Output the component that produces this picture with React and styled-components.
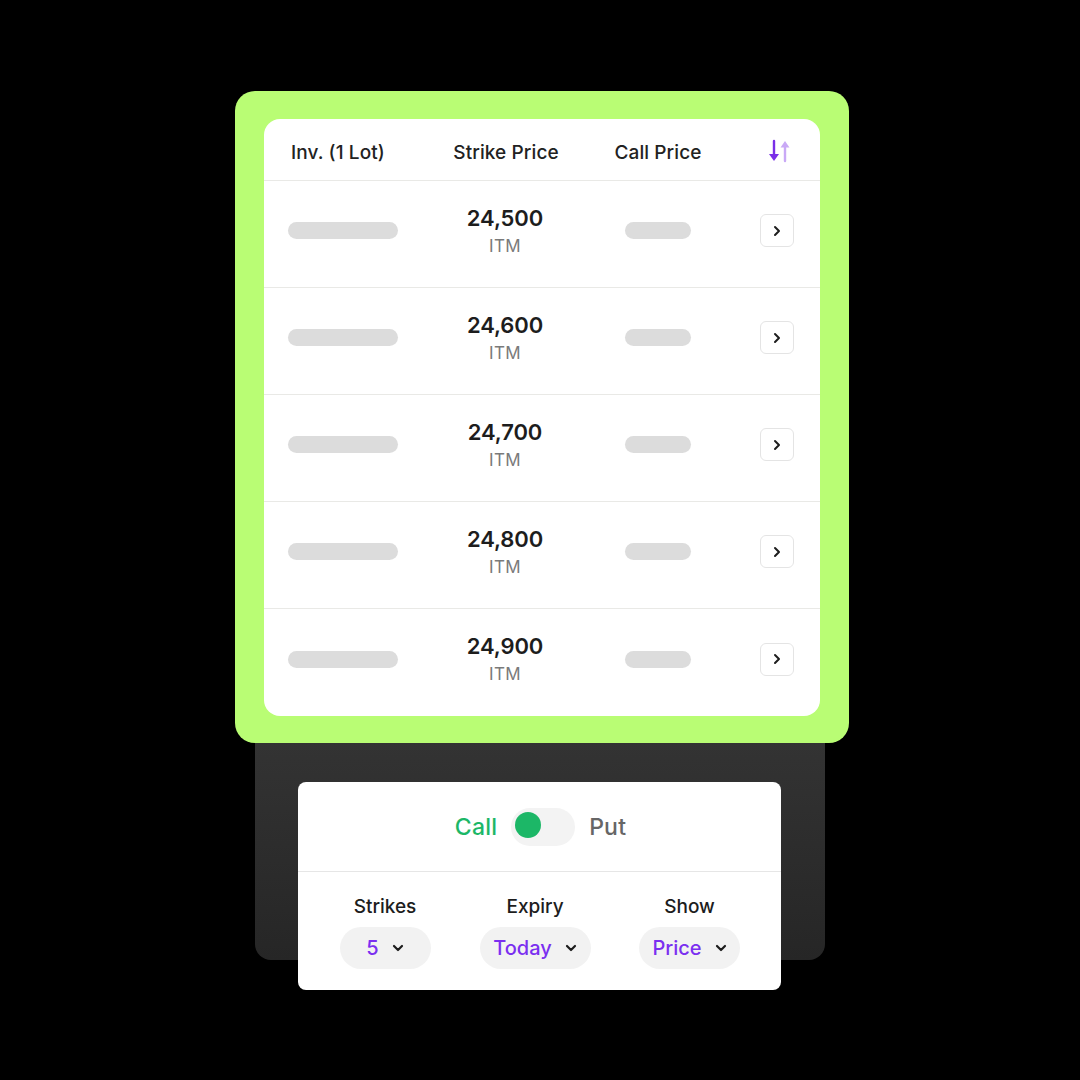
import React from 'react';
import styled, { createGlobalStyle } from 'styled-components';

const GlobalStyle = createGlobalStyle`
  html, body {
    margin: 0;
    padding: 0;
    background: #000;
  }
  body {
    font-family: Inter, "Noto Sans", sans-serif;
    -webkit-font-smoothing: antialiased;
  }
`;

const Page = styled.div`
  width: 1080px;
  height: 1080px;
  display: flex;
  flex-direction: column;
  align-items: center;
  padding-top: 91px;
  box-sizing: border-box;
`;

const GreenCard = styled.div`
  width: 614px;
  margin-left: 4px;
  box-sizing: border-box;
  padding: 28px 29px 27px 29px;
  background: #b9fd74;
  border-radius: 20px;
  position: relative;
  z-index: 1;
`;

const Table = styled.div`
  background: #fff;
  border-radius: 16px;
  overflow: hidden;
`;

const Grid = styled.div`
  display: grid;
  grid-template-columns: 140px 156px 148px 1fr;
  align-items: center;
  padding: ${p => (p.$head ? '0' : '0 0 7px 0')};
  padding-left: 24px;
  padding-right: 26px;
  box-sizing: border-box;
  height: ${p => p.$h}px;
  border-bottom: ${p => (p.$last ? 'none' : '1.5px solid #e9e9e6')};
`;

const HeadCell = styled.div`
  font-size: 19px;
  font-weight: 500;
  color: #222;
  letter-spacing: 0.1px;
  margin-top: 5px;
  white-space: nowrap;
  text-align: ${p => p.$align || 'center'};
  padding-left: ${p => (p.$align === 'left' ? '3px' : '0')};
`;

const SortCell = styled.div`
  display: flex;
  justify-content: flex-end;
  padding-right: 2px;
  margin-top: 3px;
`;

const Skeleton = styled.div`
  width: ${p => p.$w}px;
  height: 17px;
  border-radius: 9px;
  background: #dcdcdc;
  justify-self: ${p => p.$justify || 'start'};
`;

const Strike = styled.div`
  display: flex;
  flex-direction: column;
  align-items: center;
  margin-left: -2px;
  gap: 4px;
`;

const StrikeValue = styled.div`
  font-size: 22px;
  font-weight: 600;
  color: #1d1d1d;
  letter-spacing: -0.1px;
  line-height: 26px;
`;

const StrikeTag = styled.div`
  font-size: 17px;
  color: #7a7a7a;
  line-height: 22px;
  letter-spacing: 0.3px;
`;

const ChevronBtn = styled.div`
  justify-self: end;
  width: 34px;
  height: 33px;
  box-sizing: border-box;
  border: 1.5px solid #e4e4e4;
  border-radius: 6px;
  display: flex;
  align-items: center;
  justify-content: center;
  color: #222;
`;

const DarkPanel = styled.div`
  width: 570px;
  height: 217px;
  box-sizing: border-box;
  padding-top: 39px;
  border-radius: 0 0 16px 16px;
  background: linear-gradient(180deg, #333 0%, #262626 100%);
  display: flex;
  justify-content: center;
`;

const ControlCard = styled.div`
  width: 483px;
  height: 208px;
  flex-shrink: 0;
  background: #fff;
  border-radius: 8px;
  display: flex;
  flex-direction: column;
  margin-left: -1px;
`;

const ToggleRow = styled.div`
  height: 89px;
  display: flex;
  align-items: center;
  justify-content: center;
  gap: 14px;
  border-bottom: 1.5px solid #e6e6e6;
  padding-left: 2px;
`;

const ToggleLabel = styled.span`
  font-size: 23px;
  font-weight: 500;
  letter-spacing: 0.2px;
  color: ${p => (p.$active ? '#1cb767' : '#666')};
  margin-top: 1px;
`;

const Track = styled.div`
  width: 64px;
  height: 38px;
  border-radius: 19px;
  background: #f3f3f3;
  display: flex;
  align-items: center;
  padding-left: 4px;
  box-sizing: border-box;
`;

const Knob = styled.div`
  width: 26px;
  height: 26px;
  border-radius: 50%;
  background: #1cb767;
  margin-top: -3px;
`;

const Filters = styled.div`
  flex: 1;
  display: grid;
  grid-template-columns: 174px 126px 1fr;
  padding-top: 23px;
`;

const Filter = styled.div`
  display: flex;
  flex-direction: column;
  align-items: center;
  gap: 9px;
`;

const FilterLabel = styled.div`
  font-size: 19px;
  font-weight: 500;
  color: #1d1d1d;
`;

const Pill = styled.div`
  height: 42px;
  padding: 0 12px 0 13px;
  border-radius: 21px;
  background: #f2f2f2;
  display: flex;
  align-items: center;
  gap: 12px;
  box-sizing: border-box;
  min-width: ${p => p.$min || 0}px;
  justify-content: center;
`;

const PillValue = styled.span`
  font-size: 20px;
  font-weight: 500;
  color: #7b2ff0;
`;

const SortIcon = () => (
  <svg width="26" height="26" viewBox="0 0 26 26">
    <path d="M8 3 V19" stroke="#7a2fe8" strokeWidth="2.4" strokeLinecap="round" />
    <path d="M3 16 L8 23 L13 16 Z" fill="#7a2fe8" />
    <path d="M19 23 V8" stroke="#c9a9f6" strokeWidth="2.4" strokeLinecap="round" />
    <path d="M14.5 9.5 L19 3 L23.5 9.5 Z" fill="#c9a9f6" />
  </svg>
);

const ChevronRight = () => (
  <svg width="12" height="12" viewBox="0 0 12 12">
    <path d="M4 2 L8 6 L4 10" fill="none" stroke="#1d1d1d" strokeWidth="2" strokeLinecap="round" strokeLinejoin="round" />
  </svg>
);

const ChevronDown = () => (
  <svg width="14" height="14" viewBox="0 0 14 14">
    <path d="M3 5 L7 9 L11 5" fill="none" stroke="#1d1d1d" strokeWidth="2.2" strokeLinecap="round" strokeLinejoin="round" />
  </svg>
);

const strikes = ['24,500', '24,600', '24,700', '24,800', '24,900'];

const filters = [
  { label: 'Strikes', value: '5', min: 91 },
  { label: 'Expiry', value: 'Today', min: 111 },
  { label: 'Show', value: 'Price', min: 99 },
];

export default function App() {
  return (
    <>
      <GlobalStyle />
      <Page>
        <GreenCard>
          <Table>
            <Grid $head $h={62}>
              <HeadCell $align="left">Inv. (1 Lot)</HeadCell>
              <HeadCell>Strike Price</HeadCell>
              <HeadCell>Call Price</HeadCell>
              <SortCell>
                <SortIcon />
              </SortCell>
            </Grid>
            {strikes.map((s, i) => (
              <Grid key={s} $h={107} $last={i === strikes.length - 1}>
                <Skeleton $w={110} />
                <Strike>
                  <StrikeValue>{s}</StrikeValue>
                  <StrikeTag>ITM</StrikeTag>
                </Strike>
                <Skeleton $w={66} $justify="center" />
                <ChevronBtn>
                  <ChevronRight />
                </ChevronBtn>
              </Grid>
            ))}
          </Table>
        </GreenCard>
        <DarkPanel>
          <ControlCard>
            <ToggleRow>
              <ToggleLabel $active>Call</ToggleLabel>
              <Track>
                <Knob />
              </Track>
              <ToggleLabel>Put</ToggleLabel>
            </ToggleRow>
            <Filters>
              {filters.map(f => (
                <Filter key={f.label}>
                  <FilterLabel>{f.label}</FilterLabel>
                  <Pill $min={f.min}>
                    <PillValue>{f.value}</PillValue>
                    <ChevronDown />
                  </Pill>
                </Filter>
              ))}
            </Filters>
          </ControlCard>
        </DarkPanel>
      </Page>
    </>
  );
}
